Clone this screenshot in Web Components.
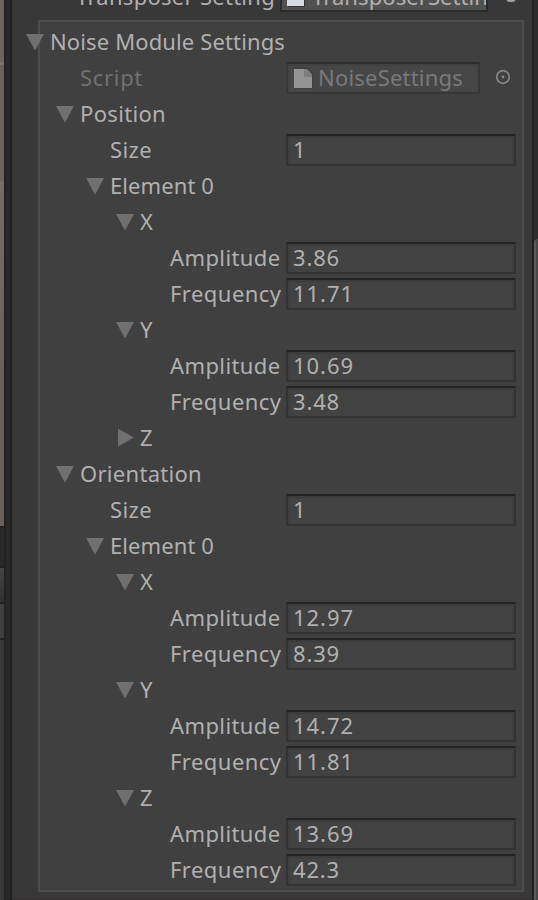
<!DOCTYPE html>
<html lang="en"><head><meta charset="utf-8"><title>Inspector</title>
<style>html,body{margin:0;height:900px;overflow:hidden;background:#383838}</style></head>
<body><inspector-window></inspector-window>
<script>
class FitText extends HTMLElement{
  connectedCallback(){
    const r=this.attachShadow({mode:'open'});
    r.innerHTML='<style>:host{display:inline-block;white-space:pre;line-height:36px}</style><span><slot></slot></span>';
    const s=r.querySelector('span'),w=+this.getAttribute('w'),n=this.textContent.length;
    if(w)s.style.letterSpacing=(w-s.getBoundingClientRect().width)/n+'px';
  }
}
class FoldArrow extends HTMLElement{
  connectedCallback(){
    const closed=this.hasAttribute('closed');
    this.attachShadow({mode:'open'}).innerHTML=`<style>:host{display:block;width:25px;height:36px;flex:none}svg{display:block}</style>
    <svg width="25" height="36"><path fill="#707070" d="${closed?'M3 8.5V26.5L19 17.5Z':'M1 10H19L10 26.5Z'}"/></svg>`;
  }
}
class ValueField extends HTMLElement{
  connectedCallback(){
    this.attachShadow({mode:'open'}).innerHTML=`<style>
    :host{display:flex;box-sizing:border-box;width:230px;height:32px;border:2px solid #333;border-top-color:#222;background:#424242;box-shadow:inset 0 2px #3c3c3c,inset -2px 0 #3e3e3e,inset 2px 0 #3e3e3e;padding-left:5px;align-items:center;color:#b0b0b0}
    :host([object]){width:194px;border-color:#373737;border-top-color:#2d2d2d;background:#464646;box-shadow:inset 0 2px #414141,inset 2px 0 #434343;color:#797979}
    fit-text{margin-top:-2px}svg{flex:none;margin-right:5px}</style>
    ${this.hasAttribute('object')?'<svg width="20" height="24"><path fill="#3f3f3f" d="M1 1H14L20 7V23H1Z"/><path fill="#929496" d="M1 3H12V9H19V22H1Z"/><path fill="#7c7e7f" d="M12 3H14L19 8V11H11V3Z"/></svg>':''}<fit-text w="${this.getAttribute('w')}">${this.getAttribute('value')}</fit-text>`;
  }
}
class PropertyRow extends HTMLElement{
  connectedCallback(){
    const a=k=>this.getAttribute(k),fold=a('fold');
    this.attachShadow({mode:'open'}).innerHTML=`<style>
    :host{display:grid;grid-template-columns:274px 1fr;height:36px}
    .label{display:flex;padding-left:${+a('indent')+16-(fold?25:0)}px;color:${this.hasAttribute('dim')?'#717171':'#b0b0b0'};white-space:nowrap}
    .label fit-text{margin-top:-1px}
    .value{display:flex;align-items:center}</style>
    <div class="label">${fold?`<fold-arrow ${fold==='closed'?'closed':''}></fold-arrow>`:''}<fit-text w="${a('w')}">${a('label')}</fit-text></div><div class="value"><slot></slot></div>`;
  }
}
class TargetPicker extends HTMLElement{
  connectedCallback(){
    this.attachShadow({mode:'open'}).innerHTML='<style>:host{display:block;margin-left:15px}svg{display:block}</style><svg width="18" height="20"><circle cx="8" cy="9" r="6.3" fill="none" stroke="#858585" stroke-width="1.7"/><circle cx="8" cy="9" r="1.4" fill="#858585"/></svg>';
  }
}
class SideStrip extends HTMLElement{
  connectedCallback(){
    this.attachShadow({mode:'open'}).innerHTML=`<style>
    :host{display:grid;grid-template-columns:4px 2px 4px 2px;height:900px}
    .view{display:grid;grid-template-rows:526px 2px 38px 2px 34px 2px 34px 2px 260px}
    .scene{background:linear-gradient(#6c645e 0 62px,#7a736d 62px 65px,#6a625c 65px 180px,#756c65 182px,#6a625d 350px,#68605b)}
    .edge,.line{background:#222}.gap{background:#292929}.bar{background:linear-gradient(#444,#303030)}.item{background:#404040}.rest{background:#383838}</style>
    <div class="view"><div class="scene"></div><div class="line"></div><div class="gap"></div><div class="line"></div><div class="bar"></div><div class="line"></div><div class="item"></div><div class="line"></div><div class="rest"></div></div>
    <div class="edge"></div><div class="gap"></div><div class="edge" style="background:#1f1f1f"></div>`;
  }
}
class ScrollStrip extends HTMLElement{
  connectedCallback(){
    this.attachShadow({mode:'open'}).innerHTML=`<style>:host{display:grid;grid-template-columns:2px 4px;height:900px}
    .edge{background:#222}.track{background:#2c2c2c;padding-top:239px;box-sizing:border-box}.thumb{height:661px;box-sizing:border-box;background:#474747;border-left:2px solid #5b5b5b;border-top-left-radius:4px}</style>
    <div class="edge"></div><div class="track"><div class="thumb"></div></div>`;
  }
}
class PreviousRow extends HTMLElement{
  connectedCallback(){
    this.attachShadow({mode:'open'}).innerHTML=`<style>
    :host{display:flex;height:20px;overflow:hidden;align-items:flex-end;color:#b0b0b0}
    .name{width:204px;padding-left:64px;flex:none;height:36px;margin-bottom:6px}
    .object{box-sizing:border-box;width:208px;height:36px;margin-bottom:8px;border:2px solid #2c2c2c;border-width:0 2px 2px;background:#505050;display:flex;align-items:flex-end;overflow:hidden;padding-left:5px;flex:none}
    .icon{width:17px;height:22px;background:#d6dcdf;box-shadow:1px 1px #333;margin:0 8px 4px 0;flex:none}
    .object fit-text{margin-bottom:-4px}
    .dot{width:10px;height:8px;border-radius:5px;background:#a0a0a0;margin:0 0 18px 18px}</style>
    <div class="name"><fit-text w="199">Transposer Setting</fit-text></div><div class="object"><span class="icon"></span><fit-text w="176">TransposerSettin</fit-text></div><span class="dot"></span>`;
  }
}
class InspectorWindow extends HTMLElement{
  connectedCallback(){
    const num=(name,v,w)=>`<property-row indent="${name==='Size'?82:142}" label="${name}" w="${name==='Size'?42:name==='Amplitude'?110.5:111.5}"><value-field value="${v}" w="${w}"></value-field></property-row>`;
    const fold=(label,indent,w,state='open')=>`<property-row label="${label}" indent="${indent}" w="${w}" fold="${state}"></property-row>`;
    this.attachShadow({mode:'open'}).innerHTML=`<style>
    :host{display:grid;grid-template-columns:12px 520px 6px;width:538px;height:900px;overflow:hidden;background:#383838;font:22px/36px "Noto Sans","Open Sans",sans-serif}
    main{display:flex;flex-direction:column;min-width:0;height:898px;border-bottom:2px solid #342f30}
    section{box-sizing:border-box;width:486px;height:872px;margin-left:26px;border:2px solid #4d4d4d;background:#404040;padding-top:2px;flex:none}
    property-row{margin-left:-28px}
    </style><side-strip></side-strip><main><previous-row></previous-row><section>
    ${fold('Noise Module Settings',22,235)}
    <property-row label="Script" indent="52" w="63" dim><value-field object value="NoiseSettings" w="145"></value-field><target-picker></target-picker></property-row>
    ${fold('Position',52,86)}${num('Size',1,13)}${fold('Element 0',82,104)}${fold('X',112,14)}
    ${num('Amplitude','3.86',47)}${num('Frequency','11.71',61)}${fold('Y',112,14)}${num('Amplitude','10.69',61)}${num('Frequency','3.48',47)}${fold('Z',112,14,'closed')}
    ${fold('Orientation',52,122)}${num('Size',1,13)}${fold('Element 0',82,104)}${fold('X',112,14)}
    ${num('Amplitude','12.97',61)}${num('Frequency','8.39',47)}${fold('Y',112,14)}${num('Amplitude','14.72',61)}${num('Frequency','11.81',61)}${fold('Z',112,14)}
    ${num('Amplitude','13.69',61)}${num('Frequency','42.3',47)}
    </section></main><scroll-strip></scroll-strip>`;
  }
}
for(const [n,c] of [['fit-text',FitText],['fold-arrow',FoldArrow],['value-field',ValueField],['property-row',PropertyRow],['target-picker',TargetPicker],['side-strip',SideStrip],['scroll-strip',ScrollStrip],['previous-row',PreviousRow],['inspector-window',InspectorWindow]])customElements.define(n,c);
</script></body></html>
